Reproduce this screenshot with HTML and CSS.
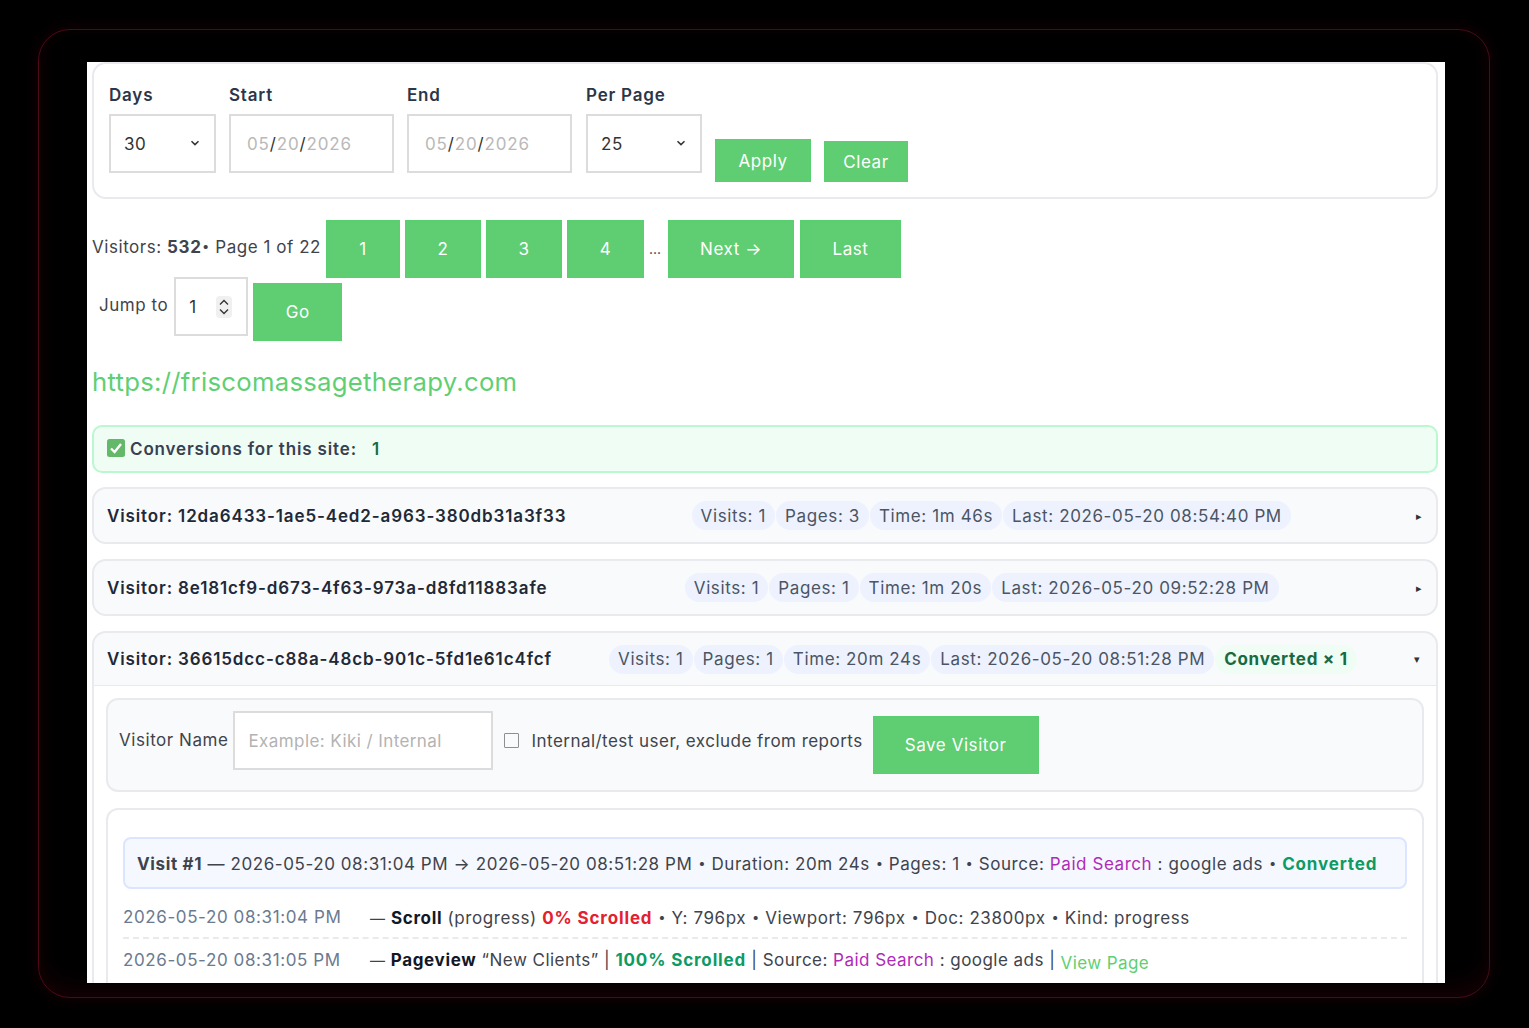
FILE: index.html
```html
<!DOCTYPE html>
<html lang="en">
<head>
  <meta charset="UTF-8">
  <meta name="viewport" content="width=device-width, initial-scale=1.0">
  <title>Visitors</title>
  <link rel="stylesheet" href="styles.css">
</head>
<body>
  <div class="frame">
    <div class="panel">
      <form class="filters">
        <div class="field field-days">
          <label>Days</label>
          <div class="control select-box"><span>30</span>
            <svg class="chevron" viewBox="0 0 10 6"><path d="M1.5 1.2 5 4.6l3.5-3.4"/></svg>
          </div>
        </div>
        <div class="field field-date">
          <label>Start</label>
          <div class="control date-box"><span class="faded">05</span>/<span class="faded">20</span>/<span class="faded">2026</span></div>
        </div>
        <div class="field field-date">
          <label>End</label>
          <div class="control date-box"><span class="faded">05</span>/<span class="faded">20</span>/<span class="faded">2026</span></div>
        </div>
        <div class="field field-per">
          <label>Per Page</label>
          <div class="control select-box"><span>25</span>
            <svg class="chevron" viewBox="0 0 10 6"><path d="M1.5 1.2 5 4.6l3.5-3.4"/></svg>
          </div>
        </div>
        <button type="button" class="btn btn-apply">Apply</button>
        <button type="button" class="btn btn-clear">Clear</button>
      </form>

      <div class="pager">
        <span class="pager-info">Visitors: <b>532</b><span class="sep">•</span> Page 1 of 22</span>
        <a class="btn page-btn w-74">1</a>
        <a class="btn page-btn w-76">2</a>
        <a class="btn page-btn w-76">3</a>
        <a class="btn page-btn w-77">4</a>
        <span class="dots">...</span>
        <a class="btn page-btn w-126">Next →</a>
        <a class="btn page-btn w-101">Last</a>
      </div>

      <div class="jump">
        <span class="jump-label">Jump to</span>
        <div class="control number-box"><span>1</span>
          <svg class="spinner" viewBox="0 0 16 22">
            <rect width="16" height="22" rx="4" fill="#f0f0f0"/>
            <path d="M4 8.5 8 4.5l4 4M4 13.5l4 4 4-4"/>
          </svg>
        </div>
        <a class="btn btn-go">Go</a>
      </div>

      <a class="site-link">https://friscomassagetherapy.com</a>

      <div class="conversions">
        <svg class="check-icon" viewBox="0 0 18 18">
          <rect width="18" height="18" rx="2.5" fill="#63b86a"/>
          <path d="M4 9.5 7.6 13 14 5"/>
        </svg>
        <span class="conv-label">Conversions for this site:</span>
        <span class="conv-count">1</span>
      </div>

      <div class="visitor">
        <div class="visitor-head">
          <span class="visitor-id">Visitor: 12da6433-1ae5-4ed2-a963-380db31a3f33</span>
          <div class="chips">
            <span class="chip">Visits: 1</span>
            <span class="chip">Pages: 3</span>
            <span class="chip">Time: 1m 46s</span>
            <span class="chip">Last: 2026-05-20 08:54:40 PM</span>
          </div>
          <span class="caret">▸</span>
        </div>
      </div>

      <div class="visitor">
        <div class="visitor-head">
          <span class="visitor-id">Visitor: 8e181cf9-d673-4f63-973a-d8fd11883afe</span>
          <div class="chips">
            <span class="chip">Visits: 1</span>
            <span class="chip">Pages: 1</span>
            <span class="chip">Time: 1m 20s</span>
            <span class="chip">Last: 2026-05-20 09:52:28 PM</span>
          </div>
          <span class="caret">▸</span>
        </div>
      </div>

      <div class="visitor visitor-open">
        <div class="visitor-head">
          <span class="visitor-id">Visitor: 36615dcc-c88a-48cb-901c-5fd1e61c4fcf</span>
          <div class="chips">
            <span class="chip">Visits: 1</span>
            <span class="chip">Pages: 1</span>
            <span class="chip">Time: 20m 24s</span>
            <span class="chip">Last: 2026-05-20 08:51:28 PM</span>
            <span class="chip chip-green">Converted × 1</span>
          </div>
          <span class="caret">▾</span>
        </div>
        <div class="visitor-body">
          <div class="name-card">
            <span class="name-label">Visitor Name</span>
            <div class="control name-input">Example: Kiki / Internal</div>
            <span class="checkbox"></span>
            <span class="internal-label">Internal/test user, exclude from reports</span>
            <a class="btn btn-save">Save Visitor</a>
          </div>
          <div class="log-card">
            <div class="visit-head">
              <b>Visit #1</b> — 2026-05-20 08:31:04 PM → 2026-05-20 08:51:28 PM <span class="sep">•</span> Duration: 20m 24s <span class="sep">•</span> Pages: 1 <span class="sep">•</span> Source: <span class="purple">Paid Search</span> : google ads <span class="sep">•</span> <b class="green">Converted</b>
            </div>
            <div class="log-row log-dashed">
              <span class="log-time">2026-05-20 08:31:04 PM</span>
              <span class="log-text"><span class="dash">—</span> <b class="dark">Scroll</b> (progress) <b class="red">0% Scrolled</b> <span class="sep">•</span> Y: 796px <span class="sep">•</span> Viewport: 796px <span class="sep">•</span> Doc: 23800px <span class="sep">•</span> Kind: progress</span>
            </div>
            <div class="log-row log-second">
              <span class="log-time">2026-05-20 08:31:05 PM</span>
              <span class="log-text"><span class="dash">—</span> <b class="dark">Pageview</b> “New Clients” | <b class="green">100% Scrolled</b> | Source: <span class="purple">Paid Search</span> : google ads | <a class="view-link">View Page</a></span>
            </div>
          </div>
        </div>
      </div>
    </div>
  </div>
</body>
</html>
```

FILE: styles.css
```css
* {
  box-sizing: border-box;
}

body {
  margin: 0;
  height: 1028px;
  padding: 29px 39px 30px 38px;
  background: #000;
  font-family: 'Inter', 'Liberation Sans', sans-serif;
  font-size: 17px;
  letter-spacing: 0.55px;
  color: #3f444c;
  overflow: hidden;
}

b {
  font-weight: 700;
  letter-spacing: 0.65px;
}

.sep {
  margin: 0 0.5px;
  font-size: 13px;
  letter-spacing: 0;
  vertical-align: 1.5px;
}

/* dark device frame */
.frame {
  height: 969px;
  padding: 32px 44px 14px 48px;
  border: 1.5px solid rgba(120, 16, 38, 0.65);
  border-radius: 32px;
  box-shadow: 0 0 16px rgba(110, 0, 30, 0.22), inset 0 -12px 22px rgba(110, 0, 30, 0.14), inset 0 0 20px rgba(110, 0, 30, 0.08);
}

.panel {
  height: 921px;
  padding: 0 7px 0 5px;
  background: #fff;
  overflow: hidden;
}

/* buttons */
.btn {
  display: flex;
  align-items: center;
  justify-content: center;
  background: #5fcd72;
  border: 1px solid #58d06f;
  color: #fff;
  font: inherit;
  letter-spacing: inherit;
}

.control {
  display: flex;
  align-items: center;
  height: 59px;
  background: #fff;
  border: 2px solid #dcdcdc;
  color: #333;
}

/* filter form */
.filters {
  display: flex;
  align-items: flex-start;
  gap: 13px;
  height: 137px;
  padding: 21px 15px 0;
  border: 2px solid #e8eaee;
  border-radius: 14px;
}

.field label {
  display: block;
  margin-bottom: 9px;
  line-height: 20px;
  font-weight: 600;
  letter-spacing: 0.8px;
  color: #2b3648;
}

.field-days {
  width: 107px;
}

.field-date {
  width: 165px;
}

.field-per {
  width: 116px;
  margin-left: 1px;
}

.select-box {
  justify-content: space-between;
  padding: 0 14px 0 13px;
}

.chevron {
  width: 10px;
  height: 6px;
  margin-top: -2px;
}

.chevron path,
.spinner path {
  fill: none;
  stroke: #333;
  stroke-width: 1.5;
}

.date-box {
  padding-left: 16px;
  letter-spacing: 0.85px;
}

.faded {
  color: #b9b9b9;
}

.btn-apply {
  width: 96px;
  height: 43px;
  margin-top: 54px;
}

.btn-clear {
  width: 84px;
  height: 41px;
  margin-top: 56px;
}

/* pagination */
.pager {
  display: flex;
  align-items: flex-start;
  margin-top: 21px;
  height: 58px;
}

.pager-info {
  width: 234px;
  line-height: 52px;
  white-space: nowrap;
}

.page-btn {
  height: 58px;
  margin-right: 5px;
}

.w-74 { width: 74px; }
.w-76 { width: 76px; }
.w-77 { width: 77px; }
.w-101 { width: 101px; margin-left: 1px; }
.w-126 { width: 126px; }

.dots {
  width: 19px;
  line-height: 58px;
  font-size: 14px;
  letter-spacing: 0;
  color: #333;
}

.jump {
  display: flex;
  align-items: flex-start;
  height: 64px;
  padding-left: 7px;
  margin-top: -1px;
}

.jump-label {
  margin-right: 6px;
  line-height: 56px;
}

.number-box {
  justify-content: space-between;
  width: 74px;
  height: 59px;
  padding: 0 14px 0 13px;
}

.spinner {
  width: 16px;
  height: 22px;
}

.spinner path {
  stroke-width: 1.3;
}

.btn-go {
  width: 89px;
  height: 58px;
  margin-top: 6px;
  margin-left: 5px;
}

.site-link {
  display: block;
  margin-top: 22px;
  line-height: 38px;
  font-size: 25.7px;
  letter-spacing: 0.28px;
  color: #5fcf73;
}

/* conversions banner */
.conversions {
  display: flex;
  align-items: center;
  height: 48px;
  margin-top: 24px;
  margin-bottom: -1px;
  padding: 0 13px;
  background: #f0fdf4;
  border: 2px solid #bbf7d0;
  border-radius: 10px;
  font-weight: 600;
}

.check-icon {
  width: 18px;
  height: 18px;
  margin: -2px 5px 0 0;
}

.check-icon path {
  fill: none;
  stroke: #fff;
  stroke-width: 2.4;
}

.conv-label {
  letter-spacing: 0.85px;
  color: #374151;
}

.conv-count {
  margin-left: 15px;
  color: #166b45;
}

/* visitor rows */
.visitor {
  margin-top: 15px;
  background: #f8fafc;
  border: 2px solid #e8eaee;
  border-radius: 14px;
  overflow: hidden;
}

.visitor-head {
  display: flex;
  align-items: center;
  justify-content: space-between;
  height: 53px;
  padding: 0 14px 0 13px;
}

.visitor-id {
  font-weight: 600;
  letter-spacing: 0.87px;
  color: #1f2937;
}

.chips {
  display: flex;
  gap: 1px;
}

.chip {
  padding: 2.5px 9px;
  background: #eef2ff;
  border-radius: 15px;
  line-height: 24px;
  letter-spacing: 0.62px;
  color: #4b5563;
}

.chip-green {
  background: #f0fdf4;
  font-weight: 700;
  letter-spacing: 0.72px;
  color: #166b45;
}

.caret {
  font-size: 11px;
  letter-spacing: 0;
  color: #333;
}

.visitor-open {
  height: 400px;
  border-bottom: 0;
}

.visitor-open .visitor-head {
  height: 52px;
  padding-right: 16px;
}

.visitor-head + .visitor-body {
  border-top: 1px solid #e8eaee;
}

.visitor-body {
  padding: 12px 12px 0;
  background: #fff;
}

.name-card {
  display: flex;
  align-items: flex-start;
  height: 94px;
  padding: 11px 11px 0;
  background: #f8fafc;
  border: 2px solid #e8eaee;
  border-radius: 12px;
}

.name-label {
  margin-right: 5px;
  line-height: 58px;
  color: #3f444c;
}

.name-input {
  width: 260px;
  height: 59px;
  padding-left: 13px;
  letter-spacing: 0.42px;
  color: #b3b3b3;
}

.checkbox {
  width: 15px;
  height: 15px;
  margin: 22px 12px 0 11px;
  border: 1.5px solid #8f8f8f;
  border-radius: 1px;
}

.internal-label {
  margin-right: 10px;
  line-height: 60px;
  letter-spacing: 0.47px;
}

.btn-save {
  width: 166px;
  height: 58px;
  margin-top: 5px;
}

.log-card {
  height: 300px;
  margin-top: 16px;
  padding: 27px 15px 0;
  background: #fff;
  border: 2px solid #e8eaee;
  border-radius: 12px;
}

.visit-head {
  height: 52px;
  padding: 0 12px;
  background: #f6f8ff;
  border: 2px solid #dbe5ff;
  border-radius: 8px;
  line-height: 48px;
  letter-spacing: 0.57px;
  white-space: nowrap;
}

.log-row {
  display: flex;
  line-height: 41px;
  white-space: nowrap;
}

.visit-head + .log-row {
  margin-top: 9px;
}

.log-dashed {
  height: 41px;
  line-height: 39px;
  border-bottom: 2px dashed #e8eaee;
}

.log-second {
  padding-top: 1px;
}

.log-time {
  width: 247px;
  letter-spacing: 0.6px;
  color: #6b7a90;
}

.log-text {
  letter-spacing: 0.58px;
}

.log-second .log-text {
  letter-spacing: 0.47px;
}

.dash {
  font-size: 15px;
}

.dark {
  color: #111827;
}

.red,
.green {
  letter-spacing: 0.85px;
}

.red {
  color: #e5202e;
}

.green {
  color: #0e9a63;
}

.purple {
  color: #b02ab8;
}

.view-link {
  vertical-align: -3px;
  letter-spacing: 0.4px;
  color: #5fcf73;
}
```
